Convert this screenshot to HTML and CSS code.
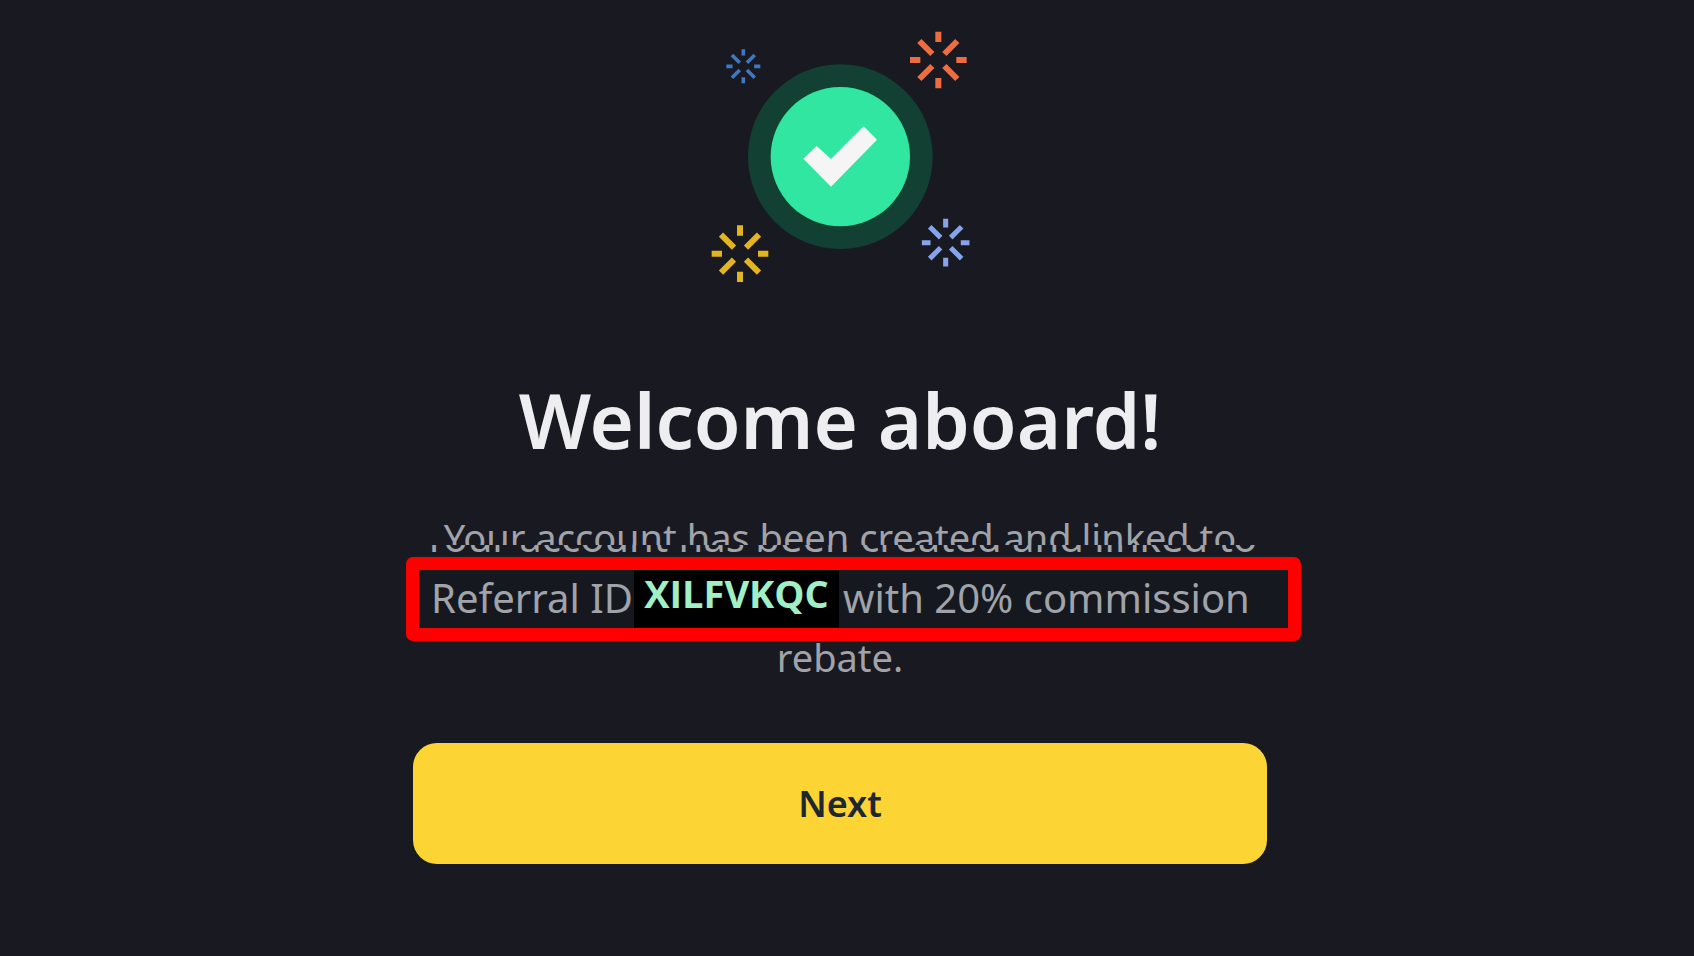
FILE: index.html
```html
<!DOCTYPE html>
<html lang="en">
<head>
<meta charset="utf-8">
<meta name="viewport" content="width=device-width, initial-scale=1">
<title>Welcome aboard!</title>
<link rel="stylesheet" href="styles.css">
</head>
<body>
<main class="welcome">
  <svg class="art" viewBox="0 0 900 870" aria-hidden="true">
    <defs>
      <g id="burst" fill="none" stroke="currentColor" stroke-width="18">
        <path d="M0-85V-54M0 54V85M-85 0H-54M54 0H85"/>
        <path d="M-57-57L-18-18M57-57L18-18M-57 57L-18 18M57 57L18 18"/>
      </g>
    </defs>
    <circle cx="451" cy="440" r="277" fill="#124033"/>
    <circle cx="451" cy="440" r="209" fill="#30e6a0"/>
    <path d="M340 446L380 408L423 447L521 349L561 389L423 530Z" fill="#f5f5f5"/>
    <use href="#burst" class="blue" transform="translate(160 169) scale(.6)"/>
    <use href="#burst" class="orange" transform="translate(745 150)"/>
    <use href="#burst" class="gold" transform="translate(150 731)"/>
    <use href="#burst" class="lilac" transform="translate(767 698) scale(.84)"/>
  </svg>
  <h1 class="title">Welcome aboard!</h1>
  <div class="message">
    <p class="line intro"><span class="intro-text">Your account has been created and linked to</span><span class="intro-echo" aria-hidden="true">Your account has been created and linked to</span></p>
    <p class="referral"><span class="referral-label">Referral ID</span><strong class="code">XILFVKQC</strong><span>with 20% commission</span></p>
    <p class="line rebate">rebate.</p>
  </div>
  <button class="next" type="button">Next</button>
</main>
</body>
</html>
```
FILE: styles.css
```css
* {
  box-sizing: border-box;
}

body {
  margin: 0;
  padding: 10px 34px 0 20px;
  background: #191a21;
  color: #a0a3a9;
  font-family: "Noto Sans", "Open Sans", sans-serif;
}

.welcome {
  display: flex;
  flex-direction: column;
  align-items: center;
  max-width: 854px;
  margin: 0 auto;
}

.art {
  width: 300px;
  max-width: 100%;
}

.blue { color: #3b78c8; }
.orange { color: #ee6c42; }
.gold { color: #e3b320; }
.lilac { color: #87a4ea; }

.title {
  margin: 70px 0 47px;
  color: #eeeef1;
  font-size: 76px;
  font-weight: 600;
  line-height: 100px;
  text-align: center;
}

.message {
  align-self: stretch;
  text-align: center;
}

.line {
  margin: 0;
  font-size: 38px;
}

.intro {
  position: relative;
  line-height: 40px;
  white-space: nowrap;
}

.intro-text {
  display: block;
  clip-path: inset(-10px 0 12px);
}

/* The lower edge of the line repeats in a slightly wider setting. */
.intro-echo {
  position: absolute;
  inset: 0;
  font-size: 40px;
  clip-path: inset(28px 0 4px);
}

.referral {
  display: flex;
  align-items: flex-start;
  margin: 0 -34px 0 -7px;
  padding-left: 12px;
  border: 13px solid #ff0000;
  border-radius: 7px;
  background: #15191f;
  font-size: 40px;
  line-height: 56px;
  white-space: nowrap;
}

.referral-label {
  flex: 0 0 203px;
  text-align: left;
}

.code {
  flex: 0 0 205px;
  margin-right: 4px;
  padding: 0 0 12px;
  background: #000;
  color: #a0efc5;
  font-family: "Open Sans", "Noto Sans", sans-serif;
  font-size: 38px;
  font-weight: 700;
  line-height: 46px;
}

.rebate {
  line-height: 32px;
}

.next {
  width: 100%;
  height: 121px;
  margin-top: 70px;
  border: 0;
  border-radius: 24px;
  background: #fcd535;
  color: #202630;
  font: 600 36px/52px "Noto Sans", "Open Sans", sans-serif;
  cursor: pointer;
}
```
